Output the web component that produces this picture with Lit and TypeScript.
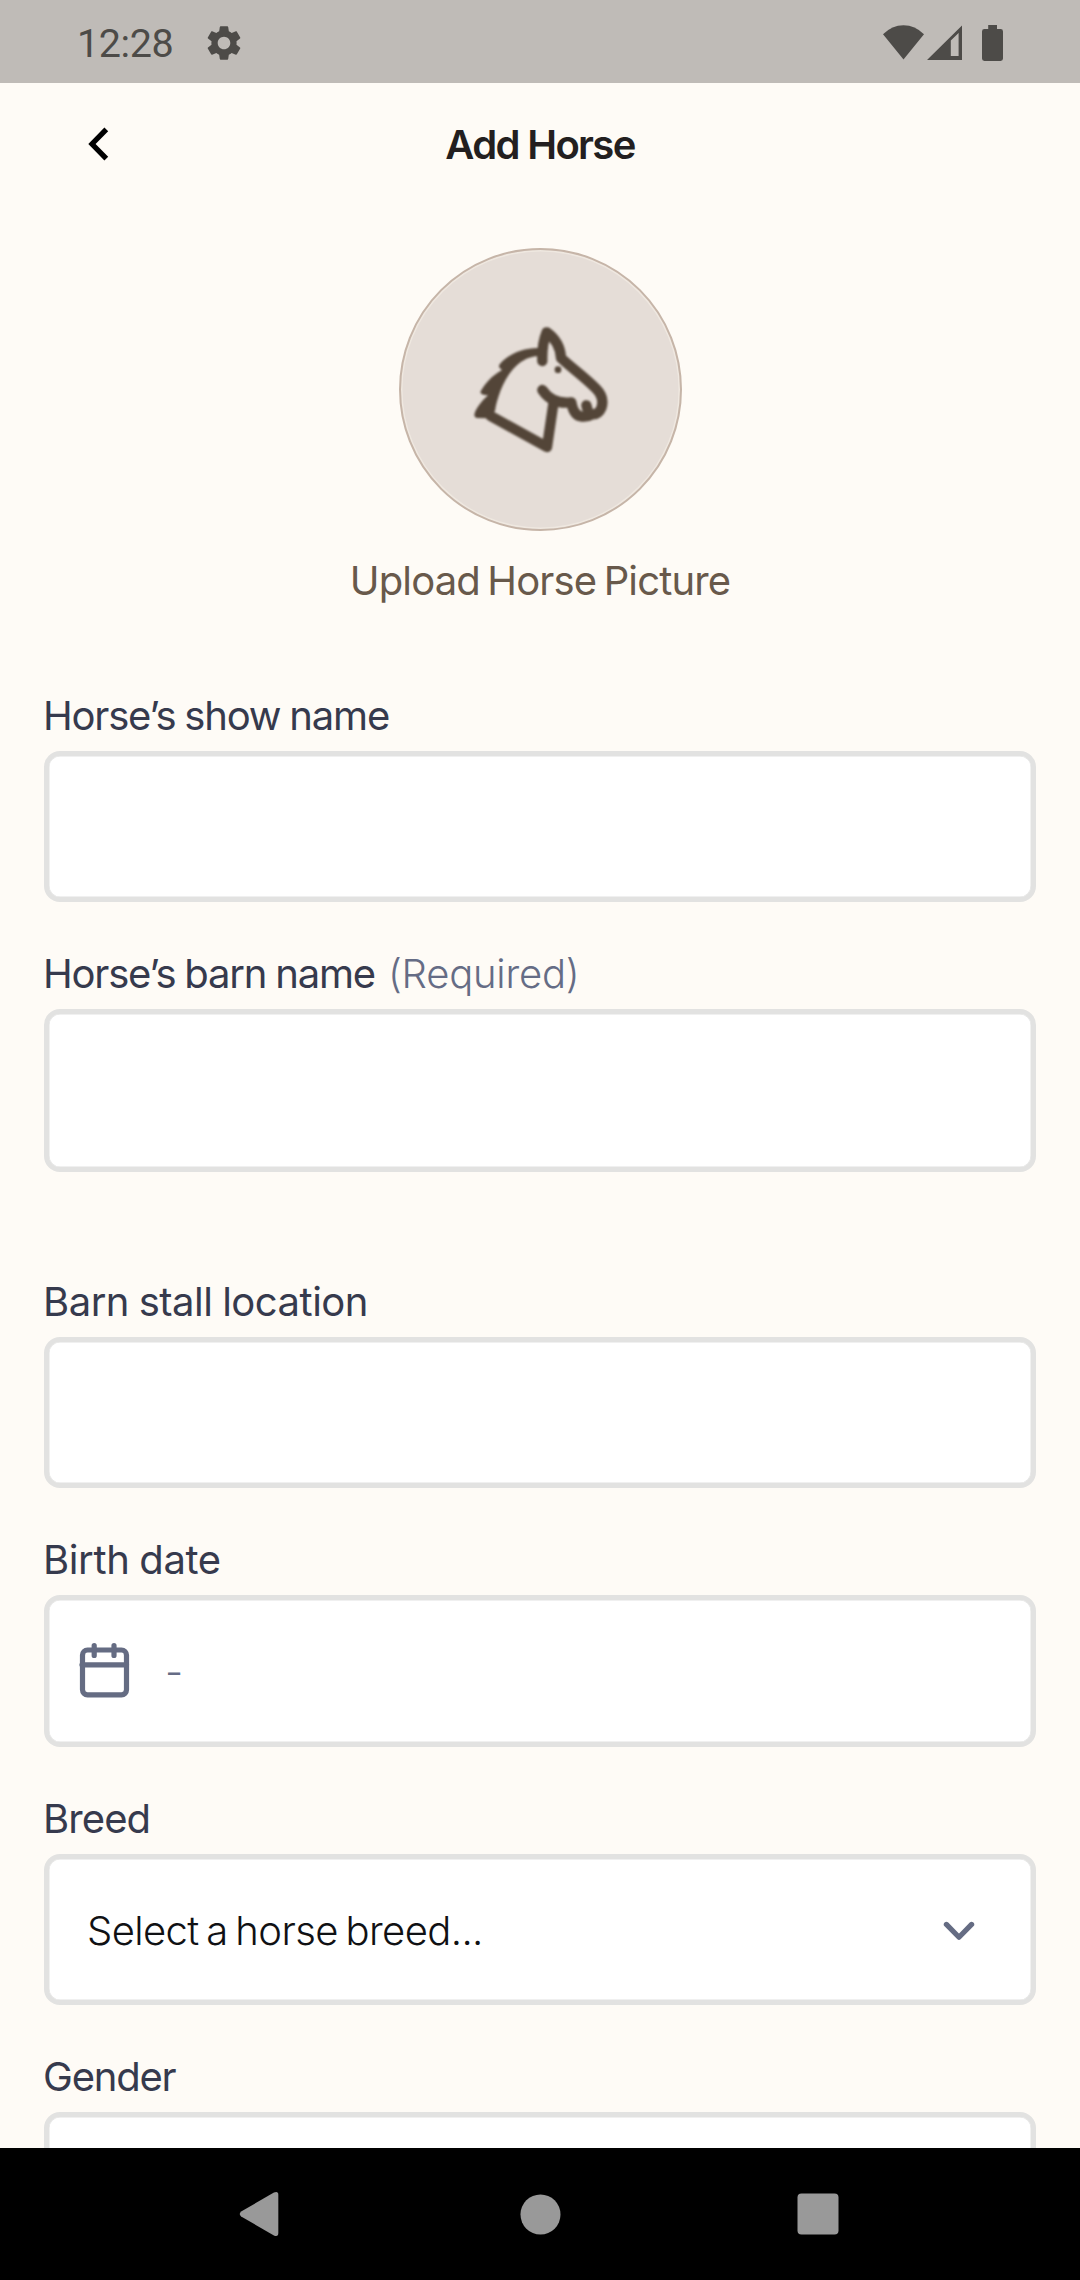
import { LitElement, html, css, svg, nothing } from "lit";
import { customElement, property } from "lit/decorators.js";
import { styleMap } from "lit/directives/style-map.js";

type Kind = "text" | "date" | "select";

interface Field {
  label: string;
  tracking: number;
  kind: Kind;
  value?: string;
  required?: boolean;
  tall?: boolean;
}

const FIELDS: Field[] = [
  { label: "Horse’s show name", tracking: -1.2, kind: "text" },
  { label: "Horse’s barn name", tracking: -1.2, kind: "text", required: true, tall: true },
  { label: "Barn stall location", tracking: -0.5, kind: "text" },
  { label: "Birth date", tracking: -0.37, kind: "date", value: "-" },
  { label: "Breed", tracking: -0.9, kind: "select", value: "Select a horse breed..." },
  { label: "Gender", tracking: -1.2, kind: "text" },
];

@customElement("status-bar")
export class StatusBar extends LitElement {
  static styles = css`
    :host {
      display: flex;
      align-items: center;
      height: 83px;
      flex: none;
      box-sizing: border-box;
      padding: 4px 77px 0 77px;
      background: #bfbbb7;
      color: #4d4b48;
    }
    .time {
      font: 400 39.5px/46px Roboto, sans-serif;
      letter-spacing: -0.4px;
      padding-top: 1px;
    }
    .gear {
      margin-left: 29.5px;
      margin-bottom: 1px;
    }
    .wifi {
      margin-left: auto;
    }
    .signal {
      margin-left: 3px;
    }
    .battery {
      margin-left: 20px;
    }
    .wifi,
    .signal,
    .battery {
      margin-bottom: 2px;
    }
    svg {
      display: block;
      fill: currentColor;
    }
  `;

  render() {
    return html`
      <span class="time">12:28</span>
      <svg class="gear" width="42" height="42" viewBox="0 0 24 24">
        <path d="M19.14 12.94c.04-.3.06-.61.06-.94 0-.32-.02-.64-.07-.94l2.03-1.58c.18-.14.23-.41.12-.61l-1.92-3.32c-.12-.22-.37-.29-.59-.22l-2.39.96c-.5-.38-1.03-.7-1.62-.94l-.36-2.54c-.04-.24-.24-.41-.48-.41h-3.84c-.24 0-.43.17-.47.41l-.36 2.54c-.59.24-1.13.57-1.62.94l-2.39-.96c-.22-.08-.47 0-.59.22L2.74 8.87c-.12.21-.08.47.12.61l2.03 1.58c-.05.3-.09.63-.09.94s.02.64.07.94l-2.03 1.58c-.18.14-.23.41-.12.61l1.92 3.32c.12.22.37.29.59.22l2.39-.96c.5.38 1.03.7 1.62.94l.36 2.54c.05.24.24.41.48.41h3.84c.24 0 .44-.17.47-.41l.36-2.54c.59-.24 1.13-.56 1.62-.94l2.39.96c.22.08.47 0 .59-.22l1.92-3.32c.12-.22.07-.47-.12-.61l-2.01-1.58zM12 15.6c-1.98 0-3.6-1.62-3.6-3.6s1.62-3.6 3.6-3.6 3.6 1.62 3.6 3.6-1.62 3.6-3.6 3.6z"/>
      </svg>
      <svg class="wifi" width="41" height="36" viewBox="0 0 41 36">
        <path d="M20.5 34.5 L0 9.3 Q9 .3 20.5 .3 T41 9.3 Z"/>
      </svg>
      <svg class="signal" width="35" height="36" viewBox="0 0 35 36">
        <path fill-rule="evenodd" d="M0 35 L35 .5 V35 Z M23.8 15.5 V31 H31.6 V8 Z"/>
      </svg>
      <svg class="battery" width="21" height="36" viewBox="0 0 21 36">
        <path d="M6.2 0 H15 V4 H18.6 Q21 4 21 6.4 V33.6 Q21 36 18.6 36 H2.4 Q0 36 0 33.6 V6.4 Q0 4 2.4 4 H6.2 Z"/>
      </svg>
    `;
  }
}

@customElement("form-field")
export class FormField extends LitElement {
  static styles = css`
    :host {
      display: block;
      flex: none;
      margin-bottom: 47.2px;
    }
    :host([tall]) {
      margin-bottom: 104.8px;
    }
    .head {
      display: flex;
      gap: 13px;
      height: 48px;
      margin: 0 0 12.1px -1px;
      line-height: 49px;
      word-spacing: -1px;
      white-space: nowrap;
      color: #363a4d;
    }
    .note {
      font-weight: 300;
      letter-spacing: -0.23px;
      color: #656c85;
    }
    .box {
      display: flex;
      align-items: center;
      box-sizing: border-box;
      height: 151.2px;
      border: 5px solid #e2e2e1;
      border-radius: 16px;
      background: #fff;
      box-shadow: inset 0 0 0 0.5px #e2e2e1;
    }
    .box.tall {
      height: 162.6px;
    }
    .date {
      padding: 0 0 2px 30px;
      color: #656c85;
    }
    .date .value {
      margin-left: 35px;
      padding-top: 3px;
      font-weight: 300;
    }
    .select {
      padding: 3px 56px 0 38px;
      justify-content: space-between;
      color: #101114;
    }
    .select .value {
      font-weight: 300;
      letter-spacing: -0.6px;
      word-spacing: -3px;
    }
    svg {
      display: block;
      fill: none;
      stroke: #656c83;
      stroke-width: 5.2;
      stroke-linecap: round;
      stroke-linejoin: round;
    }
  `;

  @property({ attribute: false }) field!: Field;

  private contents() {
    const f = this.field;
    if (f.kind === "date") {
      return html`
        <svg width="51" height="56" viewBox="0 0 51 56">
          <rect x="3.5" y="8" width="44" height="44.8" rx="5"/>
          <path d="M3 22.8 H47.5"/>
          <path d="M15.2 3.6 V13.4 M35 3.6 V13.4"/>
        </svg>
        <span class="value">${f.value}</span>`;
    }
    if (f.kind === "select") {
      return html`
        <span class="value">${f.value}</span>
        <svg width="32" height="20" viewBox="0 0 32 20">
          <path d="M3.4 3.4 L16 16.2 L28.6 3.4"/>
        </svg>`;
    }
    return nothing;
  }

  render() {
    const f = this.field;
    return html`
      <div class="head">
        <span style=${styleMap({ letterSpacing: `${f.tracking}px` })}>${f.label}</span>
        ${f.required ? html`<span class="note">(Required)</span>` : nothing}
      </div>
      <div class="box ${f.kind} ${f.tall ? "tall" : ""}">${this.contents()}</div>
    `;
  }
}

const horse = svg`
  <path class="fill" d="M482 352 C436 350 388 366 358 402 Q354 412 366 418 C336 434 312 462 301 484 Q303 494 324 494 C302 514 286 536 283 552 Q283 561 292 562 L324 563 L345 541 C354 484 394 374 482 376 Z"/>
  <path d="M487 391 C486 360 488 334 500 305 C524 322 541 348 543 382 C575 412 615 440 648 474 C668 494 671 512 664 532 Q656 551 638 551 Q622 560 602 557 Q580 552 574 515 C534 520 506 506 487 478"/>
  <path d="M619 524 L626 549"/>
  <path d="M520 520 L501 649 L332 556"/>
  <circle class="fill" cx="534" cy="417" r="10"/>
`;

@customElement("app-root")
export class AppRoot extends LitElement {
  static styles = css`
    :host {
      display: flex;
      flex-direction: column;
      width: 1080px;
      height: 2280px;
      overflow: hidden;
      background: #fefbf6;
      font: 400 40px/48px Inter, "Liberation Sans", sans-serif;
    }
    .header {
      display: grid;
      grid-template-columns: 1fr auto 1fr;
      align-items: center;
      flex: none;
      height: 124px;
      padding: 0 88px;
    }
    .back {
      display: block;
      margin-bottom: 2px;
    }
    .title {
      margin: 0;
      font-size: 40px;
      line-height: 48px;
      font-weight: 600;
      letter-spacing: -1.65px;
      color: #231f20;
    }
    .upload {
      display: flex;
      flex-direction: column;
      align-items: center;
      flex: none;
      padding-top: 41px;
    }
    .avatar {
      display: grid;
      place-items: center;
      box-sizing: border-box;
      width: 283px;
      height: 283px;
      border: 2px solid #c6b5a8;
      border-radius: 50%;
      background: #e5ddd7;
      box-shadow: inset 0 0 0 1.5px #efe8e0;
    }
    .horse {
      display: block;
      fill: none;
      stroke: #534538;
      stroke-width: 31;
      stroke-linecap: round;
      stroke-linejoin: round;
      filter: blur(0.8px);
    }
    .horse .fill {
      fill: #534538;
      stroke: none;
    }
    .caption {
      margin-top: 25.5px;
      letter-spacing: -0.85px;
      word-spacing: -3px;
      color: #68594b;
    }
    .form {
      display: flex;
      flex-direction: column;
      flex: 1;
      min-height: 0;
      overflow: hidden;
      padding: 86.4px 44px 0;
    }
    .nav {
      display: flex;
      align-items: center;
      justify-content: space-between;
      flex: none;
      box-sizing: border-box;
      height: 132px;
      padding: 0 241px 0 239px;
      background: #000;
    }
    .nav svg {
      display: block;
      fill: #999;
    }
    .nav .home {
      margin-left: 4px;
    }
  `;

  render() {
    return html`
      <status-bar></status-bar>
      <header class="header">
        <svg class="back" width="21" height="34" viewBox="0 0 21 34">
          <path d="M16.4 .5 L20.2 4.3 L7.6 17 L20.2 29.7 L16.4 33.5 L.3 17 Z"/>
        </svg>
        <h1 class="title">Add Horse</h1>
        <span></span>
      </header>
      <section class="upload">
        <div class="avatar">
          <svg class="horse" width="140" height="132" viewBox="270 280 420 396">${horse}</svg>
        </div>
        <div class="caption">Upload Horse Picture</div>
      </section>
      <main class="form">
        ${FIELDS.map((f) => html`<form-field .field=${f} ?tall=${f.tall}></form-field>`)}
      </main>
      <nav class="nav">
        <svg width="40" height="46" viewBox="0 0 41 46">
          <path d="M2.2 20.4 L35.8 1 Q40.3 -.8 40.3 3.4 V42.6 Q40.3 46.8 35.8 45 L2.2 25.6 Q-.6 23 2.2 20.4 Z"/>
        </svg>
        <svg class="home" width="41" height="41" viewBox="0 0 41 41"><circle cx="20.5" cy="20.5" r="20"/></svg>
        <svg width="42" height="42" viewBox="0 0 42 42"><rect x=".5" y=".5" width="41" height="41" rx="4"/></svg>
      </nav>
    `;
  }
}
